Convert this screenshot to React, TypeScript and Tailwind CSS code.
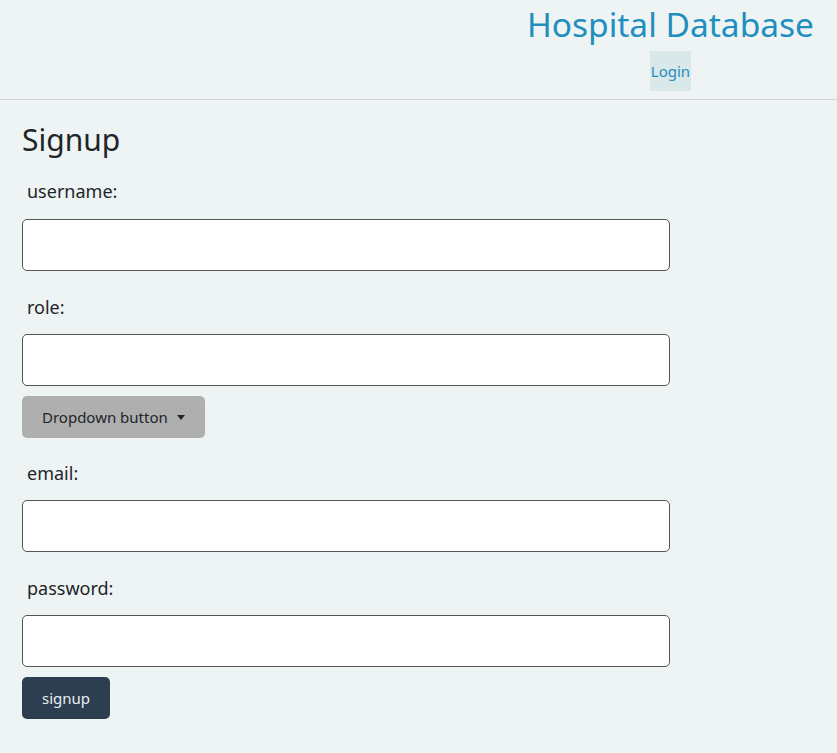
const FIELDS_TOP = ["username", "role"];

function Label({ text, first, afterButton }: { text: string; first?: boolean; afterButton?: boolean }) {
  const top = first ? "mt-[19px]" : afterButton ? "mt-[21px]" : "mt-[22px]";
  return (
    <div
      className={`${top} ${first ? "mb-[14px]" : "mb-[13px]"} h-[28px] pl-[5px] text-[18px] leading-[28px] text-[#212529]`}
    >
      {text}:
    </div>
  );
}

function Field() {
  return (
    <input
      type="text"
      className="block h-[52px] w-[648px] rounded-[5px] border border-[#555] bg-white px-3 outline-none"
    />
  );
}

export default function App() {
  return (
    <div
      className="min-h-[753px] bg-[#eef4f4]"
      style={{ fontFamily: '"Noto Sans", "Open Sans", sans-serif' }}
    >
      <header className="flex h-[100px] justify-end border-b border-[#cfd3d3] pr-[23px]">
        <div className="flex flex-col items-center">
          <h1 className="mt-[2px] h-[44px] text-[33.5px] leading-[44px] text-[#1f8fc0]">
            Hospital Database
          </h1>
          <button
            type="button"
            className="mt-[5px] h-[40px] bg-[#d9e8e8] px-[1px] text-[15px] text-[#1f8fc0]"
          >
            Login
          </button>
        </div>
      </header>

      <main className="px-[22px] pb-8">
        <h2 className="mt-[22px] h-[36px] text-[30px] leading-[36px] text-[#212529]">Signup</h2>

        {FIELDS_TOP.map((f, i) => (
          <div key={f}>
            <Label text={f} first={i === 0} />
            <Field />
          </div>
        ))}

        <button
          type="button"
          className="mt-[10px] flex h-[42px] items-center gap-[9px] rounded-[5px] bg-[#afafaf] px-[20px] text-[15px] text-[#212529]"
        >
          Dropdown button
          <span className="h-0 w-0 border-x-[4px] border-t-[5px] border-x-transparent border-t-[#212529]" />
        </button>

        <Label text="email" afterButton />
        <Field />
        <Label text="password" />
        <Field />

        <button
          type="button"
          className="mt-[10px] h-[42px] rounded-[5px] bg-[#2c3e50] px-[20px] text-[15px] text-[#e8eef2]"
        >
          signup
        </button>
      </main>
    </div>
  );
}
